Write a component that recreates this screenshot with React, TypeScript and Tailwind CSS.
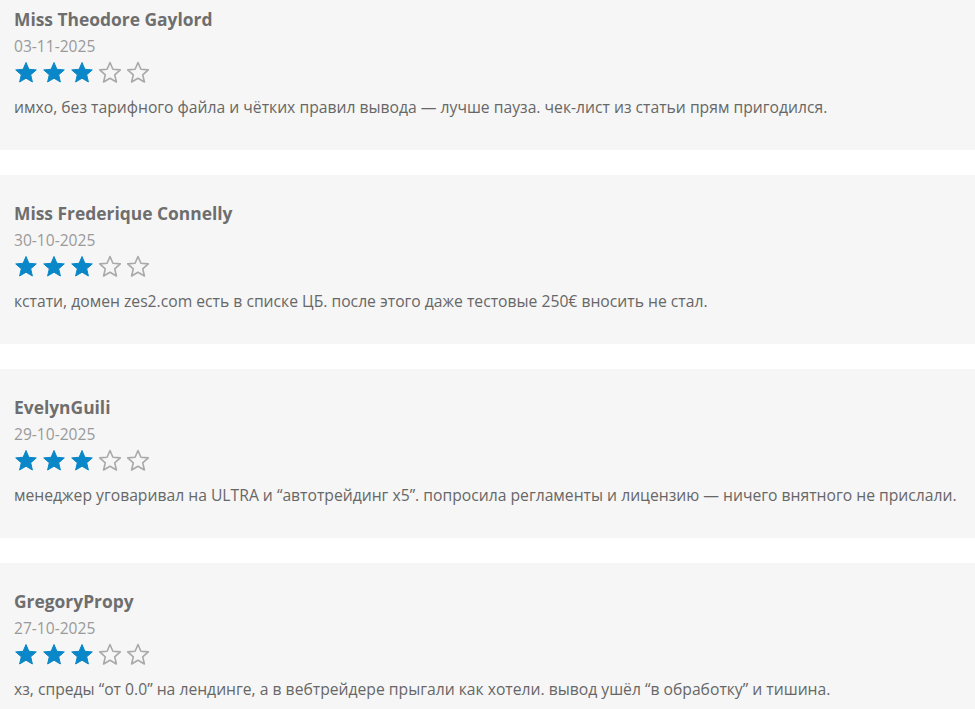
const reviews = [
  {
    name: 'Miss Theodore Gaylord',
    date: '03-11-2025',
    rating: 3,
    text: 'имхо, без тарифного файла и чётких правил вывода — лучше пауза. чек-лист из статьи прям пригодился.',
  },
  {
    name: 'Miss Frederique Connelly',
    date: '30-10-2025',
    rating: 3,
    text: 'кстати, домен zes2.com есть в списке ЦБ. после этого даже тестовые 250€ вносить не стал.',
  },
  {
    name: 'EvelynGuili',
    date: '29-10-2025',
    rating: 3,
    text: 'менеджер уговаривал на ULTRA и “автотрейдинг x5”. попросила регламенты и лицензию — ничего внятного не прислали.',
  },
  {
    name: 'GregoryPropy',
    date: '27-10-2025',
    rating: 3,
    text: 'хз, спреды “от 0.0” на лендинге, а в вебтрейдере прыгали как хотели. вывод ушёл “в обработку” и тишина.',
  },
]

function Star({ filled }: { filled: boolean }) {
  return (
    <svg width="24" height="23" viewBox="0 0 24 23" className="shrink-0">
      <polygon
        points="12,1.5 14.9,8.3 22.3,8.9 16.7,13.8 18.4,21 12,17.2 5.6,21 7.3,13.8 1.7,8.9 9.1,8.3"
        fill={filled ? '#0a87c8' : 'none'}
        stroke={filled ? '#0a87c8' : '#a9a9a9'}
        strokeWidth={filled ? 1 : 1.6}
        strokeLinejoin="round"
      />
    </svg>
  )
}

export default function App() {
  return (
    <div className="min-h-screen bg-white overflow-hidden" style={{ fontFamily: '"Open Sans", "Noto Sans", sans-serif' }}>
      <div className="-mt-[19px] flex flex-col gap-[25px]">
        {reviews.map((r) => (
          <div key={r.name} className="h-[169px] bg-[#f6f6f6] pl-[14px] pt-[25px]">
            <div className="text-[17.4px] leading-[26px] font-bold text-[#6e6e6e]">{r.name}</div>
            <div className="mt-[2px] text-[15.6px] leading-[24px] text-[#9a9a9a]">{r.date}</div>
            <div className="mt-[3px] flex items-center gap-[4px] h-[22px]">
              {[1, 2, 3, 4, 5].map((i) => (
                <Star key={i} filled={i <= r.rating} />
              ))}
            </div>
            <p className="mt-[12px] text-[15.7px] leading-[24px] text-[#676767] whitespace-nowrap">{r.text}</p>
          </div>
        ))}
      </div>
    </div>
  )
}
